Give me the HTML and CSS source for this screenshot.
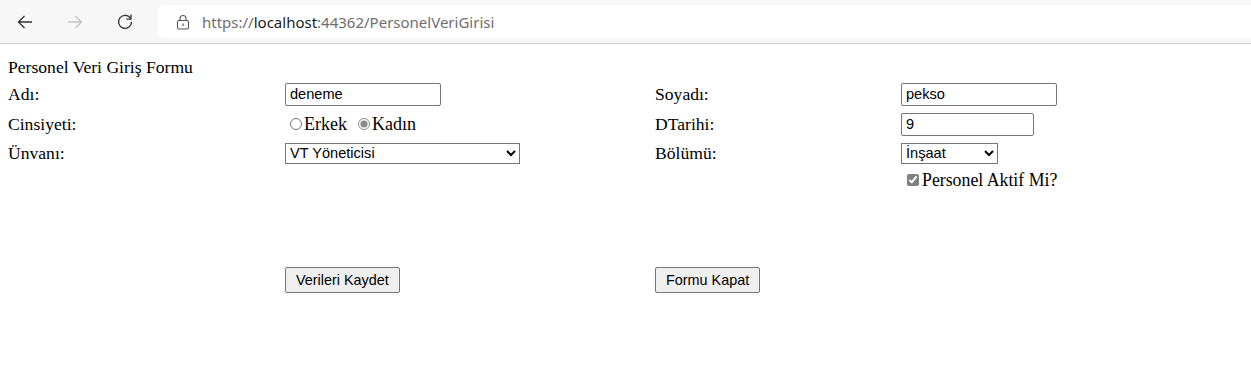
FILE: index.html
```
<!DOCTYPE html>
<html>
  <head>
    <title>PersonelVeriGirisi</title>
    <link rel="stylesheet" href="styles.css">
  </head>
  <body>
    <div class="toolbar">
        <span class="nav-btn">
            <svg width="18" height="18" viewBox="0 0 18 18"><path d="M16 9H2.5M8.5 3L2.5 9l6 6" fill="none" stroke="#333" stroke-width="1.3"/></svg>
        </span>
        <span class="nav-btn">
            <svg width="18" height="18" viewBox="0 0 18 18"><path d="M2 9h13.5M9.5 3l6 6-6 6" fill="none" stroke="#c4c4c4" stroke-width="1.3"/></svg>
        </span>
        <span class="nav-btn">
            <svg width="18" height="18" viewBox="0 0 18 18"><path d="M14.6 5.5A6.5 6.5 0 1 0 15.5 9" fill="none" stroke="#333" stroke-width="1.3"/><path d="M15 1.5v4.6h-4.6" fill="none" stroke="#333" stroke-width="1.3"/></svg>
        </span>
        <div class="address">
            <svg class="lock" width="14" height="16" viewBox="0 0 14 16"><rect x="1.5" y="6.5" width="11" height="8.5" rx="1.5" fill="none" stroke="#555" stroke-width="1.1"/><path d="M4 6.5V4.5a3 3 0 0 1 6 0v2" fill="none" stroke="#555" stroke-width="1.1"/><rect x="6.4" y="9.5" width="1.3" height="2.4" fill="#555"/></svg>
            <span class="url">https://<b>localhost</b>:44362/PersonelVeriGirisi</span>
        </div>
    </div>

    <form class="form">
        <div class="cell title">Personel Veri Giriş Formu</div>
        <div class="cell"></div>
        <div class="cell"></div>
        <div class="cell"></div>

        <div class="cell">Adı:</div>
        <div class="cell"><input class="text-box" type="text" value="deneme"></div>
        <div class="cell">Soyadı:</div>
        <div class="cell"><input class="text-box" type="text" value="pekso"></div>

        <div class="cell">Cinsiyeti:</div>
        <div class="cell radios">
            <input type="radio" name="cinsiyet" id="erkek"><label for="erkek">Erkek</label>
            <input type="radio" name="cinsiyet" id="kadin" checked><label for="kadin">Kadın</label>
        </div>
        <div class="cell">DTarihi:</div>
        <div class="cell"><input class="text-box short" type="text" value="9"></div>

        <div class="cell">Ünvanı:</div>
        <div class="cell">
            <select class="drop" id="unvan">
                <option>VT Yöneticisi</option>
                <option>Yazılım Uzmanı</option>
            </select>
        </div>
        <div class="cell">Bölümü:</div>
        <div class="cell">
            <select class="drop small" id="bolum">
                <option>İnşaat</option>
                <option>Bilgisayar</option>
            </select>
        </div>

        <div class="cell"></div>
        <div class="cell"></div>
        <div class="cell"></div>
        <div class="cell check">
            <input type="checkbox" id="aktif" checked><label for="aktif">Personel Aktif Mi?</label>
        </div>

        <div class="cell"></div>
        <div class="cell"></div>
        <div class="cell"></div>
        <div class="cell"></div>

        <div class="cell"></div>
        <div class="cell"><button type="button" class="button">Verileri Kaydet</button></div>
        <div class="cell"><button type="button" class="button">Formu Kapat</button></div>
        <div class="cell"></div>
    </form>
  </body>
</html>
```

FILE: styles.css
```
body {
  margin: 0;
  padding: 0;
  background-color: #ffffff;
  font-family: "Liberation Serif", serif;
  font-size: 17.6px;
  color: #000;
}

.toolbar {
  display: flex;
  align-items: center;
  height: 43px;
  background-color: #f7f7f7;
  border-bottom: 1px solid #cfcfcf;
}

.nav-btn {
  display: flex;
  justify-content: center;
  align-items: center;
  width: 34px;
  height: 34px;
  margin-left: 8px;
  margin-right: 8px;
}

.address {
  flex: 1;
  display: flex;
  align-items: center;
  height: 33px;
  margin-left: 8px;
  padding-left: 18px;
  background-color: #ffffff;
  border-radius: 5px 0 0 5px;
}

.lock {
  margin-right: 12px;
}

.url {
  font-family: "Noto Sans", sans-serif;
  font-size: 15px;
  color: #6e6e6e;
}

.url b {
  font-weight: normal;
  color: #1b1b1b;
}

.form {
  display: grid;
  grid-template-columns: 277px 370px 246px 1fr;
  grid-template-rows: 26px 28px 32px 26px 28px 73px 26px;
  padding: 10px 0 0 8px;
}

.cell {
  display: flex;
  align-items: center;
  white-space: nowrap;
}

.text-box {
  box-sizing: border-box;
  width: 156px;
  height: 23px;
  padding: 1px 4px;
  font-family: "Liberation Sans", sans-serif;
  font-size: 14.6px;
  border: 1px solid #767676;
  border-radius: 2px;
}

.short {
  width: 133px;
}

.drop {
  box-sizing: border-box;
  width: 235px;
  height: 21px;
  font-family: "Liberation Sans", sans-serif;
  font-size: 14.6px;
  border: 1px solid #767676;
  border-radius: 0;
  color: #000;
  background-color: #fff;
}

.small {
  width: 97px;
}

.radios input {
  margin: 0 2px 0 5px;
  width: 12px;
  height: 12px;
  accent-color: #8a8a8a;
}

.radios label {
  margin-right: 6px;
  font-size: 18px;
}

.check input {
  margin: 0 3px 0 6px;
  width: 12px;
  height: 12px;
  accent-color: #808080;
}

.check label {
  font-size: 17.8px;
}

.button {
  box-sizing: border-box;
  height: 26px;
  padding: 1px 10px;
  font-family: "Liberation Sans", sans-serif;
  font-size: 14.4px;
  color: #000;
  background-color: #efefef;
  border: 1px solid #767676;
  border-radius: 2px;
}
```
